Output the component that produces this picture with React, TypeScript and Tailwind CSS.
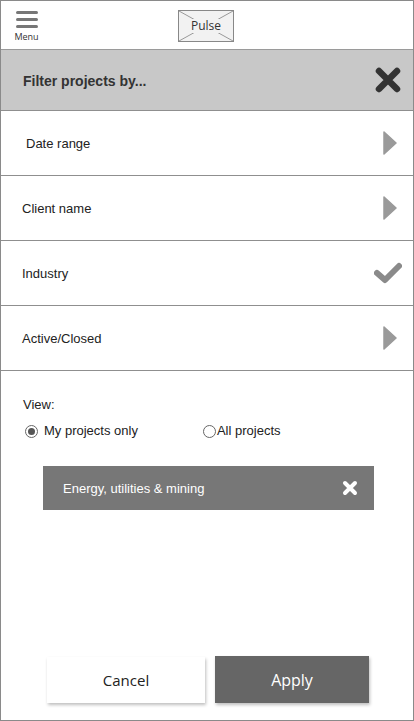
import React from "react";

const Arrow = () => (
  <svg width="14" height="24" viewBox="0 0 14 24" className="block">
    <path d="M1 1 L13 12 L1 23 Z" fill="#9a9a9a" stroke="#9a9a9a" strokeWidth="1.5" strokeLinejoin="round" />
  </svg>
);

const Check = () => (
  <svg width="28" height="22" viewBox="0 0 28 22" className="block">
    <path d="M3 11 L11 18 L25 4" fill="none" stroke="#8a8a8a" strokeWidth="6" strokeLinecap="round" strokeLinejoin="round" />
  </svg>
);

const Row = ({ label, icon, pl = "pl-[21px]" }: { label: string; icon: React.ReactNode; pl?: string }) => (
  <div className={`h-[65px] border-b border-[#8f8f8f] flex items-center justify-between ${pl} pr-[16px]`}>
    <span className="text-[13px] text-[#222] pt-[2px]" style={{ fontFamily: '"Liberation Sans", Arial, sans-serif' }}>{label}</span>
    {icon}
  </div>
);

export default function App() {
  const sans = { fontFamily: '"Liberation Sans", Arial, sans-serif' };
  const ui = { fontFamily: '"Open Sans", "Noto Sans", sans-serif' };
  return (
    <div className="w-[414px] h-[721px] bg-white border border-[#8a8a8a] flex flex-col overflow-hidden" style={sans}>
      {/* Top bar */}
      <div className="h-[49px] shrink-0 border-b border-[#9a9a9a] flex items-start">
        <div className="ml-[13px] mt-[10px] w-[25px] flex flex-col items-center">
          <div className="w-[22px] flex flex-col gap-[4px]">
            <div className="h-[3px] bg-[#777] rounded-sm" />
            <div className="h-[3px] bg-[#777] rounded-sm" />
            <div className="h-[3px] bg-[#777] rounded-sm" />
          </div>
          <span className="text-[9px] leading-[10px] mt-[4px] text-[#333]" style={ui}>Menu</span>
        </div>
        <div className="ml-[139px] mt-[9px] w-[56px] h-[32px] border border-[#888] bg-[#f2f2f2] relative flex items-center justify-center">
          <svg className="absolute inset-0" width="54" height="30" viewBox="0 0 54 30">
            <path d="M0 0 L54 30 M54 0 L0 30" stroke="#999" strokeWidth="1" />
          </svg>
          <span className="relative text-[12px] text-[#333] bg-[#f2f2f2] px-[1px] leading-[14px]" style={ui}>Pulse</span>
        </div>
      </div>

      {/* Filter header */}
      <div className="h-[61px] shrink-0 bg-[#c8c8c8] border-b border-[#8f8f8f] flex items-center justify-between pl-[22px] pr-[11px]">
        <span className="text-[14px] font-bold text-[#333] pt-[2px]">Filter projects by...</span>
        <svg width="28" height="28" viewBox="0 0 28 28" className="block">
          <path d="M5 5 L23 23 M23 5 L5 23" stroke="#333" strokeWidth="6.5" strokeLinecap="round" />
        </svg>
      </div>

      <Row label="Date range" icon={<Arrow />} pl="pl-[25px]" />
      <Row label="Client name" icon={<Arrow />} />
      <Row label="Industry" icon={<div className="-mr-[5px]"><Check /></div>} />
      <Row label="Active/Closed" icon={<Arrow />} />

      {/* View */}
      <div className="pl-[22px] pt-[26px]">
        <div className="text-[13px] leading-[16px] text-[#222]">View:</div>
        <div className="mt-[10px] flex items-center h-[16px] text-[13px] text-[#222]">
          <div className="ml-[2px] w-[13px] h-[13px] rounded-full border border-[#666] flex items-center justify-center">
            <div className="w-[7px] h-[7px] rounded-full bg-[#555]" />
          </div>
          <span className="ml-[6px]">My projects only</span>
          <div className="ml-[65px] w-[13px] h-[13px] rounded-full border border-[#666]" />
          <span className="ml-[1px]">All projects</span>
        </div>
      </div>

      {/* Tag */}
      <div className="ml-[42px] mt-[27px] w-[331px] h-[44px] bg-[#777] flex items-center justify-between pl-[20px] pr-[16px]">
        <span className="text-[13px] text-white pt-[2px]">Energy, utilities &amp; mining</span>
        <svg width="16" height="16" viewBox="0 0 16 16" className="block">
          <path d="M3 3 L13 13 M13 3 L3 13" stroke="#fff" strokeWidth="4" strokeLinecap="round" />
        </svg>
      </div>

      {/* Buttons */}
      <div className="mt-auto mb-[17px] flex items-end gap-[10px] pl-[46px]">
        <button className="w-[158px] h-[46px] bg-white shadow-[1px_2px_3px_rgba(0,0,0,0.25)] text-[15px] text-[#222]" style={ui}>Cancel</button>
        <button className="w-[154px] h-[47px] bg-[#666] shadow-[1px_2px_3px_rgba(0,0,0,0.25)] text-[16px] text-white" style={ui}>Apply</button>
      </div>
    </div>
  );
}
